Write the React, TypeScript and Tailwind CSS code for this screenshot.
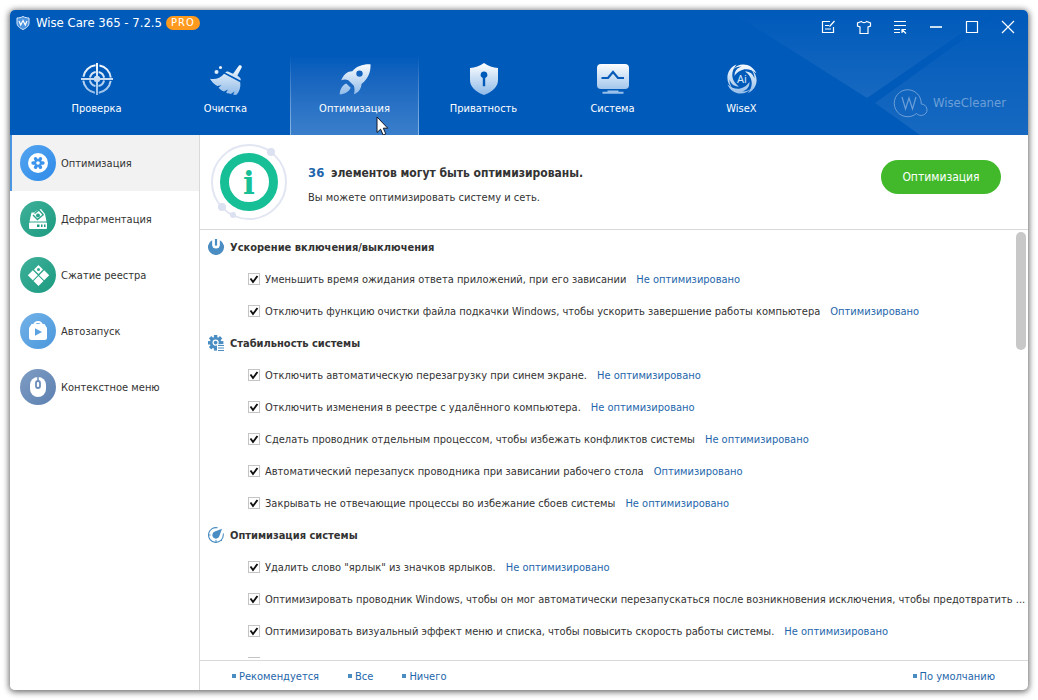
import React, { useState } from 'react';

interface Option {
  text: string;
  optimized?: boolean;
  hideStatus?: boolean;
}

interface Group {
  title: string;
  icon: React.ReactNode;
  options: Option[];
}

const PowerIcon = () => (
  <svg viewBox="0 0 16 16" className="w-4 h-4 shrink-0" aria-hidden="true">
    <path d="M4.4 .9A8 8 0 1 0 11.6 .9V5.5A3.6 3.6 0 1 1 4.4 5.5Z" fill="#4a8dc2" />
    <path d="M4.4 1v5a3.6 3.6 0 0 0 7.2 0V1" fill="#fff" />
    <rect x="6.9" y="0" width="2.2" height="6.6" fill="#4a8dc2" />
  </svg>
);

const GearListIcon = () => (
  <svg viewBox="0 0 16 16" className="w-4 h-4 shrink-0" aria-hidden="true">
    <g fill="#4a8dc2">
      <rect x="5.9" y="0" width="3.4" height="15.6" />
      <rect x="5.9" y="0" width="3.4" height="15.6" transform="rotate(45 7.6 7.8)" />
      <rect x="5.9" y="0" width="3.4" height="15.6" transform="rotate(90 7.6 7.8)" />
      <rect x="5.9" y="0" width="3.4" height="15.6" transform="rotate(135 7.6 7.8)" />
      <circle cx="7.6" cy="7.8" r="5.8" />
    </g>
    <circle cx="7.6" cy="7.6" r="2.5" fill="none" stroke="#fff" strokeWidth="1.2" />
    <rect x="9" y="9.2" width="7" height="7" fill="#fff" />
    <path d="M10 10.5h6M10 13h6M10 15.5h6" stroke="#4a8dc2" strokeWidth="1.2" />
  </svg>
);

const GaugeIcon = () => (
  <svg viewBox="0 0 16 16" className="w-4 h-4 shrink-0" aria-hidden="true">
    <path d="M9.6 .8A7.4 7.4 0 1 0 15.3 8" fill="none" stroke="#4a8dc2" strokeWidth="1.1" />
    <path d="M15.3 8v-1.6M8 13v2.4M1 8h1.6M13 13l1 1" stroke="#4a8dc2" strokeWidth="1" />
    <path d="M14 1.8 11.3 9.2A3.6 3.6 0 1 1 6.8 4.6Z" fill="#4a8dc2" />
  </svg>
);

const groups: Group[] = [
  {
    title: 'Ускорение включения/выключения',
    icon: <PowerIcon />,
    options: [
      { text: 'Уменьшить время ожидания ответа приложений, при его зависании' },
      { text: 'Отключить функцию очистки файла подкачки Windows, чтобы ускорить завершение работы компьютера', optimized: true },
    ],
  },
  {
    title: 'Стабильность системы',
    icon: <GearListIcon />,
    options: [
      { text: 'Отключить автоматическую перезагрузку при синем экране.' },
      { text: 'Отключить изменения в реестре с удалённого компьютера.' },
      { text: 'Сделать проводник отдельным процессом, чтобы избежать конфликтов системы' },
      { text: 'Автоматический перезапуск проводника при зависании рабочего стола', optimized: true },
      { text: 'Закрывать не отвечающие процессы во избежание сбоев системы' },
    ],
  },
  {
    title: 'Оптимизация системы',
    icon: <GaugeIcon />,
    options: [
      { text: 'Удалить слово "ярлык" из значков ярлыков.' },
      { text: 'Оптимизировать проводник Windows, чтобы он мог автоматически перезапускаться после возникновения исключения, чтобы предотвратить ...', hideStatus: true },
      { text: 'Оптимизировать визуальный эффект меню и списка, чтобы повысить скорость работы системы.' },
    ],
  },
];

const NAV_FILL = 'url(#navFill)';

const navItems = [
  {
    label: 'Проверка',
    icon: (
      <g fill="none" stroke={NAV_FILL}>
        <circle cx="16" cy="16" r="13.8" strokeWidth="2" strokeDasharray="17.7 4" strokeDashoffset="-2" />
        <circle cx="16" cy="16" r="7.2" strokeWidth="2" strokeDasharray="8.3 3" strokeDashoffset="-1.5" />
        <rect x="0" y="15" width="32" height="2" fill={NAV_FILL} stroke="none" />
        <rect x="15" y="0" width="2" height="32" fill={NAV_FILL} stroke="none" />
        <circle cx="16" cy="16" r="3.2" fill={NAV_FILL} stroke="none" />
      </g>
    ),
  },
  {
    label: 'Очистка',
    icon: (
      <g fill={NAV_FILL}>
        <circle cx="10.5" cy="4.5" r="1.5" />
        <circle cx="6.5" cy="9" r="2" />
        <path d="M29 2.4c1.4-.8 3.3.4 2.7 2l-4.3 8.2 2.3 1.8c1.1.9 1.3 2 .8 3.2L15.2 9.6c1-1.1 2.3-1.3 3.7-.6l4.2 1.7z" />
        <path d="M14.1 10.8 30.2 19.2C31 24 29.5 28.5 26.5 31.8c-1.3.2-2.2.1-3.4-.2l1.5-3.4-3.6 2.7c-2 0-3.3-.4-4.9-1.2l1.9-3.3-4 2.2C11.3 27.4 9.7 26.1 8.6 24.5l3-2.2-4.4.7C4 21 1.5 18.6 0 15.8c5.7 1.1 10.6-.8 14.1-5z" />
      </g>
    ),
  },
  {
    label: 'Оптимизация',
    icon: (
      <g fill={NAV_FILL}>
        <path fillRule="evenodd" d="M31.5 1.2C24.5.8 18 2.7 13.3 8.2 8.5 8.3 4.8 11.3 2.2 17.2c2.7-1 5-.9 7.1 0l5.6 5.6c.8 2.6.9 5.2.1 8.4 4.7-2.1 7.3-5.5 7.5-10.3C29.2 15.7 31.9 9 31.5 1.2zM20.5 7.4a3.2 3.2 0 1 1 0 6.4 3.2 3.2 0 0 1 0-6.4z" />
        <path d="M7.2 20.4c-4 1.8-6.4 5.8-6.5 11 5.3-.2 9.1-2.6 11-6.6z" />
      </g>
    ),
  },
  {
    label: 'Приватность',
    icon: (
      <path fill={NAV_FILL} fillRule="evenodd" d="M16 0c4.2 2.9 8.8 4.5 14 5v12c0 6.8-5.2 11.6-14 15C7.2 28.6 2 23.8 2 17V5c5.2-.5 9.8-2.1 14-5zm0 8.6a3.3 3.3 0 0 0-1.2 6.4v8.2h2.4V15A3.3 3.3 0 0 0 16 8.6z" />
    ),
  },
  {
    label: 'Система',
    icon: (
      <g>
        <rect x="0" y="1" width="32" height="25" rx="4" fill={NAV_FILL} />
        <path d="M4.5 15h6.5l5-6 5 6h6" fill="none" stroke="#0a5cb8" strokeWidth="2.2" />
        <path d="M10.5 27.5h11v1.3h5v2H5.5v-2h5z" fill={NAV_FILL} />
      </g>
    ),
  },
  {
    label: 'WiseX',
    icon: (
      <g>
        <g fill={NAV_FILL}>
          <path d="M7.500 26.500C-2 19 0 6 10.500 1.500 4.500 8.500 4.500 17.500 13 23.500c-5 0-8-2.500-9.500-7 0 4 1.500 7.500 4 10z" />
          <path d="M5.500 7.500C13-2 26 0 30.500 10.500 23.500 4.500 14.500 4.500 8.500 13c0-5 2.500-8 7-9.500-4 0-7.500 1.500-10 4z" />
          <path d="M24.500 5.500C34 13 32 26 21.500 30.500 27.500 23.500 27.500 14.500 19 8.500c5 0 8 2.500 9.500 7 0-4-1.500-7.500-4-10z" />
          <path d="M26.500 24.500C19 34 6 32 1.500 21.500 8.500 27.500 17.500 27.500 23.500 19c0 5-2.500 8-7 9.500 4 0 7.500-1.500 10-4z" />
        </g>
        <text x="16" y="20" textAnchor="middle" fontSize="11" fontFamily="Noto Sans" fill="#d6e6f7">Ai</text>
      </g>
    ),
  },
];

const sideItems = [
  {
    label: 'Оптимизация',
    colors: ['#54a5f0', '#2f8ae8'],
    icon: (
      <g>
        <circle cx="18" cy="18" r="10" fill="#fff" />
        <g stroke="#3c94ec" strokeWidth="3.4" strokeLinecap="round">
          <path d="M13 18h10M15.5 13.7l5 8.6M20.5 13.7l-5 8.6" />
        </g>
        <circle cx="18" cy="18" r="3.6" fill="#3c94ec" />
        <circle cx="18" cy="18" r="1.8" fill="#fff" />
      </g>
    ),
  },
  {
    label: 'Дефрагментация',
    colors: ['#3fb09a', '#1b9b80'],
    icon: (
      <g>
        <path fill="#fff" d="M11.500 11.500h2.500l2-1.500 5-2 4 5 1.500 7.500H9.500z" />
        <rect x="9" y="21.500" width="18" height="6.500" rx="1" fill="#fff" />
        <path fill="none" stroke="#2aa58b" strokeWidth="1.400" d="m13 14 4.500 4.500 6-5M14.500 12.500 19 9l4.500 5" />
        <circle cx="18" cy="14.500" r="2" fill="#2aa58b" />
        <path d="M17 23.500h2.500v2.500H17zM21 23.500h1.500v2.500H21zM24 23.500h1.500v2.500H24z" fill="#1b9b80" />
      </g>
    ),
  },
  {
    label: 'Сжатие реестра',
    colors: ['#3fb09a', '#1b9b80'],
    icon: (
      <g fill="#fff">
        <path fillRule="evenodd" d="m18.500 8 4.500 4.500-4.500 4.500-4.500-4.500zm0 3a1.500 1.500 0 1 0 0 3 1.500 1.500 0 0 0 0-3z" />
        <path d="m12.800 13.300 5 5-5 5-5-5zM24.200 13.300l5 5-5 5-5-5zM18.500 19l5 5-5 5-5-5z" />
      </g>
    ),
  },
  {
    label: 'Автозапуск',
    colors: ['#73b2e8', '#4a97dc'],
    icon: (
      <g>
        <path d="M14 12.500a4 3.500 0 0 1 8 0" fill="none" stroke="#fff" strokeWidth="2" />
        <path d="M11.500 11h13L27 15v9.500q0 2.500-2.500 2.500h-13Q9 27 9 24.500V15z" fill="#fff" />
        <path d="M15 15.300v7.400l7-3.700z" fill="#5aa2e0" />
      </g>
    ),
  },
  {
    label: 'Контекстное меню',
    colors: ['#7f9dc4', '#5c80b0'],
    icon: (
      <g>
        <rect x="10" y="8" width="16" height="20" rx="8" fill="#fff" />
        <path d="M18 8v5" stroke="#6d8ebb" strokeWidth="1.500" />
        <rect x="16" y="12" width="4" height="7" rx="2" fill="#fff" stroke="#6d8ebb" strokeWidth="1.800" />
      </g>
    ),
  },
];

const windowButtons = [
  { label: 'Обратная связь', icon: <path d="M10 2.500H2.500v11h11V8M5 6.500h4M5 10h6M14.500 2 9.500 7.500" /> },
  { label: 'Темы', icon: <path d="M5.500 2.500 1.500 4v3l2.500 1v6.500h8V8l2.500-1V4l-4-1.500c-1 1.500-4 1.500-5 0z" /> },
  { label: 'Меню', icon: <path d="M2 2.500h12M2 6.500h12M2 10.500h6M2 13.500h6M14 14.500l-4-4M10 14v-3.500h4" /> },
  { label: 'Свернуть', icon: <path d="M2 8h12" strokeWidth="2" opacity=".8" /> },
  { label: 'Развернуть', icon: <path d="M2.500 2.500h11v11h-11z" /> },
  { label: 'Закрыть', icon: <path d="m2 2 12 12M14 2 2 14" /> },
];

const HeaderBackdrop = () => (
  <svg viewBox="0 0 300 125" className="absolute top-0 right-0 h-full" aria-hidden="true">
    <defs>
      <linearGradient id="beam" x1="0" y1="0" x2="0" y2="1">
        <stop offset="0" stopColor="#fff" stopOpacity="0" />
        <stop offset="1" stopColor="#fff" stopOpacity=".09" />
      </linearGradient>
    </defs>
    <path d="M0 0h267L139 88z" fill="url(#beam)" />
    <path d="M276 0h24v125H192L147 93z" fill="url(#beam)" />
  </svg>
);

const TitleBar = () => (
  <div className="relative flex h-[45px] items-start justify-between">
    <div className="flex items-center pt-1 pl-[6px] text-white">
      <svg viewBox="0 0 14 14" className="w-[14px] h-[14px]" aria-hidden="true">
        <path d="M7 .5c2 1 4 1.500 6 1.500v5c0 3-2.500 5-6 6.500C3.500 12 1 10 1 7V2C3 2 5 1.500 7 .5z" fill="#4c93e0" stroke="#d8e8fa" />
        <path d="m3 5 1.700 4L7 4.500 9.300 9 11 5" fill="none" stroke="#fff" strokeWidth="1.200" />
      </svg>
      <h1 className="ml-[6px] text-[13px] leading-[18px]">Wise Care 365 - 7.2.5</h1>
      <span className="ml-1 rounded-full bg-[#ff9a1e] px-[5px] text-[11px] leading-[14px] tracking-widest">PRO</span>
    </div>
    <div className="flex pr-[2px]">
      {windowButtons.map((button) => (
        <button key={button.label} aria-label={button.label} className="flex h-[34px] w-9 items-center justify-center">
          <svg viewBox="0 0 16 16" className="w-4 h-4" fill="none" stroke="#fff" strokeWidth="1.200">
            {button.icon}
          </svg>
        </button>
      ))}
    </div>
  </div>
);

const Pointer = () => (
  <svg viewBox="0 0 13 20" className="absolute left-[86px] top-[61px] w-[13px] h-5" aria-hidden="true">
    <path d="M1 1v15.500l3.600-3.300 2.500 5.800 2.700-1.200-2.500-5.600h4.500z" fill="#fff" stroke="#101828" />
  </svg>
);

const Header = () => (
  <header className="relative shrink-0 overflow-hidden bg-[#005aba]">
    <HeaderBackdrop />
    <TitleBar />
    <div className="relative flex items-center justify-between">
      <nav className="flex pl-[22px]">
        <svg className="absolute w-0 h-0" aria-hidden="true">
          <linearGradient id="navFill" gradientUnits="userSpaceOnUse" x1="0" y1="0" x2="0" y2="32">
            <stop offset="0" stopColor="#fff" />
            <stop offset="1" stopColor="#8fbae8" />
          </linearGradient>
        </svg>
        {navItems.map((item, i) => (
          <button
            key={item.label}
            className={`relative flex h-20 w-[129px] flex-col items-center pt-2 text-[11px] leading-4 text-white ${
              i === 2 ? 'bg-linear-to-b from-[#005aba] to-[#3a7fcb]' : ''
            }`}
          >
            {i === 2 && (
              <>
                <span className="absolute inset-y-0 left-0 w-px bg-linear-to-b from-transparent to-[#8bb5e3]" />
                <span className="absolute inset-y-0 right-0 w-px bg-linear-to-b from-transparent to-[#8bb5e3]" />
              </>
            )}
            <svg viewBox="0 0 32 32" className="mb-[6px] w-8 h-8" aria-hidden="true">
              {item.icon}
            </svg>
            {item.label}
            {i === 2 && <Pointer />}
          </button>
        ))}
      </nav>
      <div className="flex items-center gap-1 pr-[22px] pt-4 text-[#6c9fd8]">
        <svg viewBox="0 0 36 30" className="w-9 h-[30px]" fill="none" stroke="currentColor" aria-hidden="true">
          <path d="M28.200 16A13.500 13.500 0 1 0 23.500 25.500C27 29.500 34.500 27 34 21.500c-.3-3.500-3-5.500-5.800-5.500" />
          <path d="m9 9 3.500 12L16 10l3.500 11L23 9" strokeWidth="1.200" />
        </svg>
        <span className="text-[13px] leading-5">WiseCleaner</span>
      </div>
    </div>
  </header>
);

const Sidebar = () => (
  <aside className="w-[190px] shrink-0 border-r border-[#d9d9d9] bg-white">
    {sideItems.map((item, i) => (
      <button
        key={item.label}
        className={`flex h-14 w-full items-center gap-[5px] border-l-2 pl-2 text-left ${
          i === 0 ? 'border-[#4a96e0] bg-[#f2f2f2]' : 'border-transparent'
        }`}
      >
        <svg viewBox="0 0 36 36" className="w-9 h-9" aria-hidden="true">
          <linearGradient id={`side${i}`} x1="0" y1="0" x2="1" y2="1">
            <stop offset="0" stopColor={item.colors[0]} />
            <stop offset="1" stopColor={item.colors[1]} />
          </linearGradient>
          <circle cx="18" cy="18" r="18" fill={`url(#side${i})`} />
          {item.icon}
        </svg>
        <span className="pt-[2px]">{item.label}</span>
      </button>
    ))}
  </aside>
);

const Summary = () => (
  <section className="flex h-[95px] shrink-0 items-center border-b border-[#d9d9d9] pl-[10px] pr-[27px]">
    <svg viewBox="0 0 78 78" className="w-[78px] h-[78px]" aria-hidden="true">
      <circle cx="39" cy="39" r="37" fill="none" stroke="#e2e6f2" strokeWidth="2" />
      <circle cx="61" cy="9" r="4" fill="#dbe1f0" />
      <circle cx="12" cy="64" r="4" fill="#dbe1f0" />
      <circle cx="23" cy="72" r="3" fill="#dbe1f0" />
      <circle cx="39" cy="39" r="24.500" fill="none" stroke="#17bf97" strokeWidth="9" />
      <text x="39" y="51" textAnchor="middle" fontSize="31" fontWeight="bold" fontFamily="DejaVu Serif" fill="#17bf97">i</text>
    </svg>
    <div className="ml-5 grow pt-2">
      <h2 className="text-[12px] leading-6 font-bold">
        <span className="mr-[3px] text-[13px] text-[#1e66ab]">36</span> элементов могут быть оптимизированы.
      </h2>
      <p className="leading-[26px]">Вы можете оптимизировать систему и сеть.</p>
    </div>
    <button className="mb-[10px] h-[34px] w-[120px] rounded-full bg-[#41b92b] text-[12px] text-white">Оптимизация</button>
  </section>
);

const CheckBox = ({ checked, onChange }: { checked: boolean; onChange?: () => void }) => (
  <span className="relative h-3 w-3 shrink-0">
    <input
      type="checkbox"
      checked={checked}
      onChange={onChange}
      className="block h-3 w-3 appearance-none border border-[#c4c4c4] bg-white"
    />
    {checked && (
      <svg viewBox="0 0 12 12" className="pointer-events-none absolute inset-0" aria-hidden="true">
        <path d="m2.500 5.500 2.500 3.500L9.500 3" fill="none" stroke="#111" strokeWidth="1.900" />
      </svg>
    )}
  </span>
);

const OptionRow = ({ option }: { option: Option }) => {
  const [checked, setChecked] = useState(true);

  return (
    <li className="flex h-8 items-center gap-[10px] whitespace-nowrap pl-12">
      <label className="flex items-center gap-[5px]">
        <CheckBox checked={checked} onChange={() => setChecked(!checked)} />
        <span className="pt-[2px]">{option.text}</span>
      </label>
      {!option.hideStatus && (
        <a href="#" className="pt-[2px] text-[#1e66ab]">
          {option.optimized ? 'Оптимизировано' : 'Не оптимизировано'}
        </a>
      )}
    </li>
  );
};

const OptionList = () => (
  <div className="relative mb-[2px] min-h-0 grow overflow-hidden pt-px">
    {groups.map((group) => (
      <section key={group.title}>
        <h3 className="flex h-8 items-center gap-[6px] pl-2 font-bold">
          {group.icon}
          <span className="pt-[2px]">{group.title}</span>
        </h3>
        <ul>
          {group.options.map((option) => (
            <OptionRow key={option.text} option={option} />
          ))}
        </ul>
      </section>
    ))}
    <div className="flex h-8 items-center pl-12">
      <span className="h-3 w-3 border border-[#c4c4c4]" />
    </div>
    <div className="absolute top-[2px] right-[2px] h-[118px] w-[10px] rounded-full bg-[#c8c8c8]" />
  </div>
);

const FooterLink = ({ children }: { children: React.ReactNode }) => (
  <a href="#" className="flex items-center gap-[3px] text-[#1e66ab]">
    <span className="h-1 w-1 bg-[#4a8dc2]" />
    <span className="pt-[2px]">{children}</span>
  </a>
);

const Footer = () => (
  <footer className="flex h-[30px] shrink-0 items-center gap-[29px] border-t border-[#d9d9d9] pl-8 pr-[33px]">
    <FooterLink>Рекомендуется</FooterLink>
    <FooterLink>Все</FooterLink>
    <FooterLink>Ничего</FooterLink>
    <span className="grow" />
    <FooterLink>По умолчанию</FooterLink>
  </footer>
);

export default function App() {
  return (
    <div className="h-screen bg-white p-[10px] font-['DejaVu_Sans_Condensed','Noto_Sans',sans-serif] text-[11px] leading-4 text-[#333]">
      <div className="flex h-full flex-col overflow-hidden rounded-[5px] bg-white shadow-[0_1px_6px_1px_rgba(0,0,0,0.6)]">
        <Header />
        <div className="flex min-h-0 grow">
          <Sidebar />
          <main className="flex min-w-0 grow flex-col">
            <Summary />
            <OptionList />
            <Footer />
          </main>
        </div>
      </div>
    </div>
  );
}
